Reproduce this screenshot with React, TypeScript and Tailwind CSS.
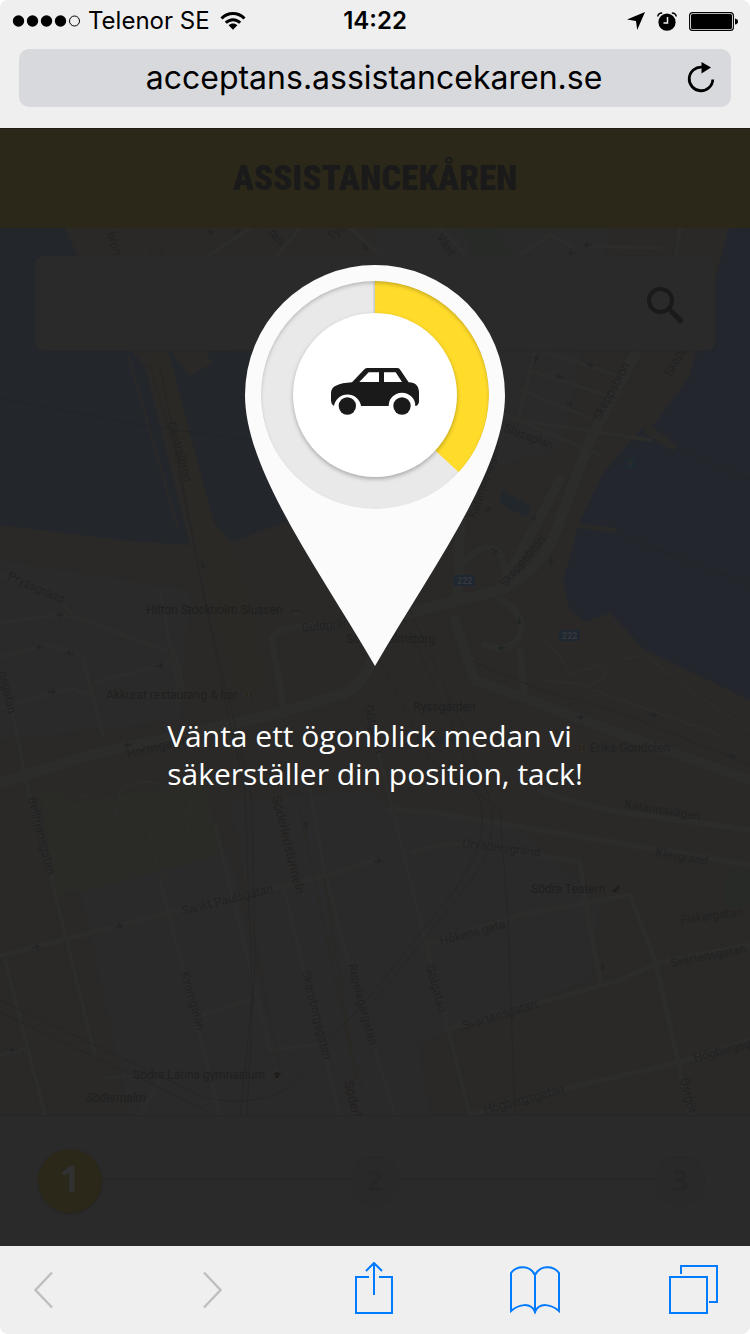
import React from "react";

type Label = { text: string; x: number; y: number; turn?: number; size?: number; fill?: string; italic?: boolean };

const labels: Label[] = [
  { text: "bron", x: 107, y: 233, turn: 73 },
  { text: "Centralbron", x: 167, y: 423, turn: 73 },
  { text: "Tys", x: 332, y: 241, turn: -42 },
  { text: "ran", x: 268, y: 233, turn: 48 },
  { text: "Väst", x: 436, y: 237, turn: 55 },
  { text: "Skeppsbron", x: 600, y: 421, turn: -62 },
  { text: "Skepp", x: 671, y: 377, turn: -62 },
  { text: "Slussplan", x: 503, y: 431, turn: 21 },
  { text: "Katarinavägen", x: 476, y: 519, turn: -72 },
  { text: "Skeppsbron", x: 505, y: 588, turn: -50 },
  { text: "Pryssgränd", x: 7, y: 579, turn: 24 },
  { text: "Hilton Stockholm Slussen", x: 146, y: 614, fill: "#1f1f1f" },
  { text: "Guldgränd", x: 302, y: 632, turn: -7 },
  { text: "Södermalmstorg", x: 346, y: 643, fill: "#202020" },
  { text: "Akkurat restaurang & bar", x: 106, y: 699, fill: "#231f1c" },
  { text: "Ryssgården", x: 413, y: 711, fill: "#202020" },
  { text: "Slussen", x: 416, y: 744, fill: "#20262c" },
  { text: "Hornsgatan", x: 128, y: 758, turn: -14 },
  { text: "Götgatan", x: 364, y: 706, turn: 76 },
  { text: "Eriks Gondolen", x: 590, y: 752 },
  { text: "Katarinavägen", x: 624, y: 808, turn: 9 },
  { text: "Bellmansgatan", x: 28, y: 798, turn: 76 },
  { text: "nsgatan", x: -1, y: 672, turn: 77 },
  { text: "Söderledstunneln", x: 272, y: 797, turn: 76, size: 13, fill: "#24211f" },
  { text: "Urvädersgränd", x: 462, y: 847, turn: 7 },
  { text: "Klevgränd", x: 655, y: 856, turn: 10 },
  { text: "Sankt Paulsgatan", x: 183, y: 915, turn: -14 },
  { text: "Södra Teatern", x: 531, y: 893, fill: "#1f1f1f" },
  { text: "Fiskargatan", x: 681, y: 924, turn: -8 },
  { text: "Hökens gata", x: 441, y: 945, turn: -15 },
  { text: "Svartensgatan", x: 671, y: 967, turn: -11 },
  { text: "Kvarngatan", x: 181, y: 973, turn: 74 },
  { text: "Götgatan", x: 426, y: 966, turn: 75 },
  { text: "Skaraborgsgatan", x: 302, y: 972, turn: 76 },
  { text: "Repslagargatan", x: 348, y: 965, turn: 75 },
  { text: "Svartensgatan", x: 464, y: 1030, turn: -17 },
  { text: "Högbergsg", x: 695, y: 1062, turn: -15 },
  { text: "Högbergsgatan", x: 485, y: 1114, turn: -15 },
  { text: "Östgöt", x: 680, y: 1079, turn: 76 },
  { text: "Södra Latins gymnasium", x: 133, y: 1079, fill: "#202020" },
  { text: "Södermalm", x: 86, y: 1102, fill: "#202020", italic: true },
  { text: "Söderl", x: 344, y: 1082, turn: 76, size: 13, fill: "#24201f" },
];

const arrows = [
  [60, 615, -6], [40, 647, 170], [70, 653, 195], [160, 666, -10], [52, 692, -10], [128, 745, 170],
  [203, 565, 90], [536, 359, -80], [590, 365, 15], [559, 377, 195], [570, 404, 15], [488, 510, -60],
  [534, 517, 120], [551, 562, -80], [495, 551, 40], [519, 621, 90], [502, 648, 180], [580, 717, 5],
  [653, 715, 12], [732, 756, 18], [119, 926, -12], [36, 947, -12], [13, 1050, 180], [378, 861, -12],
  [603, 967, 80], [306, 825, -100], [588, 245, 180], [571, 252, 90], [210, 232, 50], [237, 232, -45], [365, 247, 50],
];

function StreetMap() {
  return (
    <svg className="absolute inset-0 h-full w-full" viewBox="0 228 750 887" preserveAspectRatio="xMidYMid slice" role="img" aria-label="Karta över Slussen">
      <rect y="228" width="750" height="887" fill="#2a2928" />
      <path fill="#2a2a2a" d="M155 228H610L560 450 480 470H375V228ZM0 560 190 590 180 720 0 740ZM80 890 230 850 290 1115H130ZM230 800 375 790 430 1115H290ZM375 800 520 830 600 900 590 980 375 1060Z" />
      <path fill="#2a2a26" d="M40 790 65 790 85 890 55 895ZM60 805 205 780 220 855 80 892Z" />
      <path fill="#23272c" d="M0 228H65L85 272 130 350 145 365 190 545 130 541 0 525ZM165 350 260 352 290 520 232 542 214 522Z" />
      <path fill="#23272d" d="M729 228H750V700L645 650 610 613 585 622 570 610 563 580 575 540 578 525 590 500 602 475 640 430 656 422 690 375Z" />
      <path fill="#22272c" d="M502 490 532 507 526 517 500 504Z" />
      <path fill="#282a27" d="M462 228H495L512 256H474ZM730 870H750V905L729 908 722 890Z" />
      <path fill="#292927" d="M648 423 677 445 673 451 644 433ZM575 523 617 528 615 533 574 527Z" />
      <path fill="#2b2925" d="M145 350H168L213 520 240 560 270 690 235 690 200 560 190 520Z" />
      <path fill="#2a2927" d="M170 350H205L212 363 190 376Z" />
      <g fill="none" stroke="#2b2926" strokeWidth="2">
        <path d="M128 355 178 528 M112 228 135 300 M132 228 155 300 M200 228 250 300" />
        <path d="M298 800 350 1050 370 1115 M320 850 356 1080" />
      </g>
      <g fill="none" stroke="#2c2c2b" strokeLinejoin="round" strokeLinecap="round">
        <path strokeWidth="11" d="M0 783 90 755 280 713 345 693 Q375 680 380 620 L500 590 Q545 570 560 520 L590 440 640 345" />
        <path strokeWidth="10" d="M455 620 475 680 530 700 610 730 750 780 M500 590 560 480 M461 505 458 600" />
        <path strokeWidth="7" d="M458 570Q480 540 497 550 507 560 505 590M500 600Q525 610 520 635 510 655 485 645M520 650 525 700M285 716 272 640Q275 630 290 628L360 622" />
        <path strokeWidth="6" d="M540 790 Q560 800 620 812 L750 830 M390 810 430 812 540 830 630 845 750 865" />
        <path strokeWidth="5" d="M0 956 160 915 330 875 375 860 M412 853 Q440 842 470 845 L580 862 585 900 600 980 M425 945 520 915 630 895 655 960 680 1070 690 1115 M445 1030 620 980 660 962 750 945 M470 1115 560 1090 680 1062 750 1040" />
        <path strokeWidth="4" d="M0 623 55 615 75 617 165 650 M75 617 50 590 0 575 M0 657 48 645 82 655 103 735 M95 682 165 665 175 650 183 690 M0 708 70 688 90 695 M160 590 180 700 M10 700 30 800 47 860 95 1055 M5 960 45 1115 M0 1055 28 1048" />
        <path strokeWidth="4" d="M160 880 220 1115 M215 825 270 1050 315 1045 M283 885 340 1115 M326 875 350 970 M310 790 325 875 M375 740 430 960 470 1115 M375 1050 395 1115 M200 1015 250 1000 M105 1078 135 1075 M160 1080 140 1115" />
        <path strokeWidth="4" d="M210 255 250 228 M300 228 265 270 M350 228 430 300 M440 228 480 270 M510 262 550 235 571 245 575 270 M590 246 660 248 M680 228 670 300 M535 350 518 420 650 440 M540 350 615 375 M530 370 605 395 M520 390 590 418 M505 415 600 455" />
      </g>
      <g fill="none" stroke="#2c2c2a" strokeWidth="2">
        <path d="M530 630 560 655 570 675 600 665Q615 675 590 685L540 680 M580 685 720 735 M620 660 645 655 690 690 750 730 M116 812 120 790Q150 770 190 800L190 810 150 834 118 812 80 795 M118 812 65 872 M150 834 162 880 Q190 850 190 810" />
      </g>
      <g fill="none" stroke="#262626" strokeWidth="1">
        <path d="M150 365 175 450 225 700 245 790 252 1000 240 1115M160 365 205 600 236 730 252 800 255 960 247 1115" />
        <path d="M400 610 450 720 480 800Q490 840 455 890L375 990 285 1090Q240 1110 200 1095L0 1000M410 610 460 720 490 800Q500 850 460 895L375 1000M375 650 430 760 500 810 508 920 515 1115M0 1012 210 1112" />
        <path d="M470 660 540 690 620 712 750 765M150 250 170 310M160 245 180 300" />
        <path d="M0 398 140 425 250 440M620 535 750 585M680 450 750 480" stroke="#212529" />
      </g>
      {arrows.map(([x, y, turn], i) => (
        <path key={i} transform={`translate(${x} ${y}) rotate(${turn})`} d="M-4-.7H0V-3L4 0 0 3V.7H-4Z" fill="#232425" />
      ))}
      <g fill="#1f2730">
        <rect x="454" y="575" width="21" height="11" />
        <rect x="559" y="630" width="21" height="11" />
        <rect x="625" y="458" width="11" height="11" rx="2" fill="#1e2a30" />
      </g>
      <circle cx="630.500" cy="463" r="2.500" fill="#292c2d" />
      <g fontFamily="Roboto, sans-serif" fontSize="9" fontWeight="700" fill="#35393c">
        <text x="457" y="584">222</text>
        <text x="562" y="639">222</text>
      </g>
      <g fill="#2d2c2b">
        <circle cx="296" cy="611" r="5" />
        <circle cx="249" cy="695" r="5" />
        <circle cx="582" cy="748" r="5" />
        <circle cx="277" cy="1075" r="5" />
      </g>
      <path d="M292 609V613M292 611H300V613M294 610H299" stroke="#222" fill="none" />
      <path d="M247 692V698M251 692V698M580 745V751M584 745V751" stroke="#2a2215" strokeWidth="1.500" />
      <path d="M273 1074 277 1072 282 1074 277 1076ZM275 1076V1078H279V1076ZM613 890 617 888 617 892 613 892ZM616 886 620 886 619 890Z" fill="#1e1c1b" />
      <g fontFamily="Roboto, sans-serif" fill="#222222">
        {labels.map((l, i) => (
          <text key={i} transform={`translate(${l.x} ${l.y}) rotate(${l.turn ?? 0})`} fontSize={l.size ?? 12} fill={l.fill} fontStyle={l.italic ? "italic" : undefined}>
            {l.text}
          </text>
        ))}
      </g>
    </svg>
  );
}

function StatusBar() {
  return (
    <div className="grid h-[42px] grid-cols-[1fr_auto_1fr] items-center px-3">
      <div className="flex items-center">
        <svg width="68" height="12" viewBox="0 0 68 12" aria-label="Signal">
          <circle cx="6.500" cy="6" r="5.700" />
          <circle cx="20.500" cy="6" r="5.700" />
          <circle cx="34.500" cy="6" r="5.700" />
          <circle cx="48.500" cy="6" r="5.700" />
          <circle cx="62.500" cy="6" r="5" fill="none" stroke="#000" />
        </svg>
        <span className="ml-2 text-2xl leading-7">Telenor SE</span>
        <svg className="ml-2.5" width="26" height="20" viewBox="0 0 26 20" aria-label="Wi-Fi">
          <g fill="none" stroke="#000" strokeWidth="3">
            <path d="M1.500 7.500C8 .8 18 .8 24.500 7.500" />
            <path d="M5.800 11.700C10 7.600 16 7.600 20.200 11.700" />
          </g>
          <path d="M8.600 14.300C11.200 12 14.800 12 17.400 14.300L13 18.800Z" />
        </svg>
      </div>
      <span className="text-2xl leading-7 font-semibold">14:22</span>
      <div className="flex items-center justify-end gap-3">
        <svg width="18" height="18" viewBox="0 0 18 18" aria-label="Plats">
          <path d="M18 0 10.200 18 9 9 0 7.600Z" />
        </svg>
        <svg width="20" height="19" viewBox="0 0 20 19" aria-label="Alarm">
          <circle cx="10" cy="10.200" r="8.600" />
          <path d="M.8 4.500Q1 1.200 5.200 1M19.200 4.500Q19 1.200 14.800 1" fill="none" stroke="#000" strokeWidth="1.500" />
          <path d="M10.500 5V11H6.500" fill="none" stroke="#efeff0" strokeWidth="1.500" />
        </svg>
        <svg width="49" height="19" viewBox="0 0 49 19" aria-label="Batteri">
          <rect x=".6" y=".6" width="43.800" height="17.800" rx="3" fill="none" stroke="#000" strokeWidth="1.100" />
          <rect x="2" y="2" width="41" height="15" rx="1.500" />
          <path d="M46 6.500Q49 7 49 9.500 49 12 46 12.500Z" />
        </svg>
      </div>
    </div>
  );
}

function Pin() {
  return (
    <svg width="260" height="401" viewBox="245 265 260 401" role="img" aria-label="Söker position">
      <defs>
        <filter id="soft" x="-20%" y="-20%" width="140%" height="140%">
          <feGaussianBlur stdDeviation="2" />
        </filter>
        <clipPath id="ring">
          <circle cx="375" cy="395" r="114" />
        </clipPath>
      </defs>
      <path fill="#fbfbfb" d="M375 265A130 130 0 0 1 505 395C505 470 432 568 375 666C318 568 245 470 245 395A130 130 0 0 1 375 265Z" />
      <g clipPath="url(#ring)">
        <circle cx="375" cy="395" r="114" fill="#e9e9e9" />
        <rect x="374" y="281" width="3" height="100" fillOpacity=".25" filter="url(#soft)" />
        <path fill="#ffdb2a" d="M375 281A114 114 0 0 1 458.800 472.300L375 395Z" />
        <circle cx="375" cy="397.500" r="117" fill="none" stroke="#000" strokeOpacity=".28" strokeWidth="4" filter="url(#soft)" />
        <circle cx="375" cy="397" r="82" fill="#000" fillOpacity=".28" filter="url(#soft)" />
        <circle cx="375" cy="395" r="82" fill="#fff" />
      </g>
      <svg x="310" y="340" width="130" height="100" viewBox="0 0 390 300">
        <path fill="#1a1a1a" fillRule="evenodd" d="M63 160C63 138 85 130 126 127L164 87Q167 84 172 84H262Q266 84 269 87L296 127Q327 127 327 160V186Q324 198 316 198A40 40 0 0 0 236 198H153A41 41 0 0 0 72 198Q63 192 63 182ZM148 126H207V97H176ZM222 97V126H276L257 97Z" />
        <circle cx="112" cy="198" r="26" fill="#1a1a1a" />
        <circle cx="276" cy="198" r="26" fill="#1a1a1a" />
      </svg>
    </svg>
  );
}

export default function App() {
  return (
    <div className="flex min-h-screen flex-col overflow-hidden rounded-lg bg-[#efefef] font-[Inter,sans-serif] text-black">
      <header className="flex h-32 flex-col">
        <StatusBar />
        <div className="mx-[19px] mt-[7px] flex h-[58px] items-center rounded-[10px] bg-[#d8d9dd] pr-4 pl-[42px]">
          <input
            aria-label="Adress"
            className="min-w-0 flex-1 bg-transparent text-center text-[32px] leading-10 outline-none"
            defaultValue="acceptans.assistancekaren.se"
          />
          <button aria-label="Läs in igen" className="shrink-0">
            <svg width="28" height="32" viewBox="0 0 28 32">
              <path d="M15 5.200A11.800 11.800 0 1 0 25.800 17.500" fill="none" stroke="#000" strokeWidth="2.800" />
              <path d="M14.500 0 24 5.500 14.500 11.400Z" />
            </svg>
          </button>
        </div>
      </header>

      <main className="relative flex flex-1 flex-col bg-[#2a2a2a]">
        <div className="flex h-[100px] items-center justify-center border-t border-[#201e16] bg-[#2b2819]">
          <h1 className="font-['Roboto_Condensed','Roboto',sans-serif] text-[35px] leading-9 font-black text-[#1a1a1a]">ASSISTANCEKÅREN</h1>
        </div>

        <section className="relative flex-1 px-[35px] pt-7">
          <StreetMap />
          <form className="relative flex h-[94px] overflow-hidden rounded-lg bg-[#2a2a2a] shadow-[0_1px_2px_#262626]" onSubmit={(e) => e.preventDefault()}>
            <input aria-label="Sök adress" className="min-w-0 flex-1 bg-transparent px-6 text-2xl text-[#1a1a1a] outline-none" />
            <button aria-label="Sök" className="flex w-[102px] items-center justify-center border-l border-[#292929] pt-1">
              <svg width="38" height="38" viewBox="0 0 38 38" fill="none" stroke="#1a1a1a">
                <circle cx="14.500" cy="14.500" r="11.500" strokeWidth="4" />
                <path d="M23 23 34.500 34.500" strokeWidth="5" strokeLinecap="round" />
              </svg>
            </button>
          </form>
        </section>

        <ol className="flex h-[131px] items-center border-t border-[#262626] pr-[45px] pl-[38px] font-['Open_Sans',sans-serif] font-bold">
          <li className="flex size-16 items-center justify-center rounded-full bg-[#2b2819] pb-1 text-4xl text-[#313131] shadow-[0_1px_2px_#242424]">1</li>
          <li aria-hidden="true" className="h-[6px] flex-[248] border-t-2 border-[#272727] bg-[#292929]" />
          <li className="flex size-[50px] items-center justify-center rounded-full border-t border-[#272727] bg-[#292929] pb-1 text-[28px] text-[#262626]">2</li>
          <li aria-hidden="true" className="h-[6px] flex-[255] border-t-2 border-[#272727] bg-[#292929]" />
          <li className="flex size-[50px] items-center justify-center rounded-full border-t border-[#272727] bg-[#292929] pb-1 text-[28px] text-[#262626]">3</li>
        </ol>

        <div role="status" className="absolute inset-0 flex flex-col items-center pt-[137px]">
          <Pin />
          <p className="mt-[51px] font-['Open_Sans',sans-serif] text-[30px] leading-[38px] text-white">
            Vänta ett ögonblick medan vi
            <br />
            säkerställer din position, tack!
          </p>
        </div>
      </main>

      <nav className="grid h-[88px] grid-cols-[169fr_152fr_155fr_159fr_50px] items-center justify-items-start pr-[31px] pl-[34px]">
        <button aria-label="Tillbaka">
          <svg width="19" height="38" viewBox="0 0 19 38" fill="none" stroke="#bfbfbf" strokeWidth="2.500">
            <path d="M18 1.500 1.500 19 18 36.500" />
          </svg>
        </button>
        <button aria-label="Framåt">
          <svg width="19" height="38" viewBox="0 0 19 38" fill="none" stroke="#bfbfbf" strokeWidth="2.500">
            <path d="M1 1.500 17.500 19 1 36.500" />
          </svg>
        </button>
        <button aria-label="Dela">
          <svg width="38" height="56" viewBox="0 0 38 56" fill="none" stroke="#007aff" strokeWidth="2">
            <path d="M14 15H1V51H37V15H24M19 33V1M11 9 19 1 27 9" />
          </svg>
        </button>
        <button aria-label="Bokmärken">
          <svg width="50" height="50" viewBox="0 0 50 50" fill="none" stroke="#007aff" strokeWidth="2">
            <path d="M25 48V10C20 0 7 0 1 8V46C9 39 21 37 25 47C29 37 41 39 49 46V8C43 0 30 0 25 10" />
          </svg>
        </button>
        <button aria-label="Flikar">
          <svg width="50" height="50" viewBox="0 0 50 50" fill="none" stroke="#007aff" strokeWidth="2">
            <path d="M1 12H38V48H1ZM12 9V1H48V37H40" />
          </svg>
        </button>
      </nav>
    </div>
  );
}
